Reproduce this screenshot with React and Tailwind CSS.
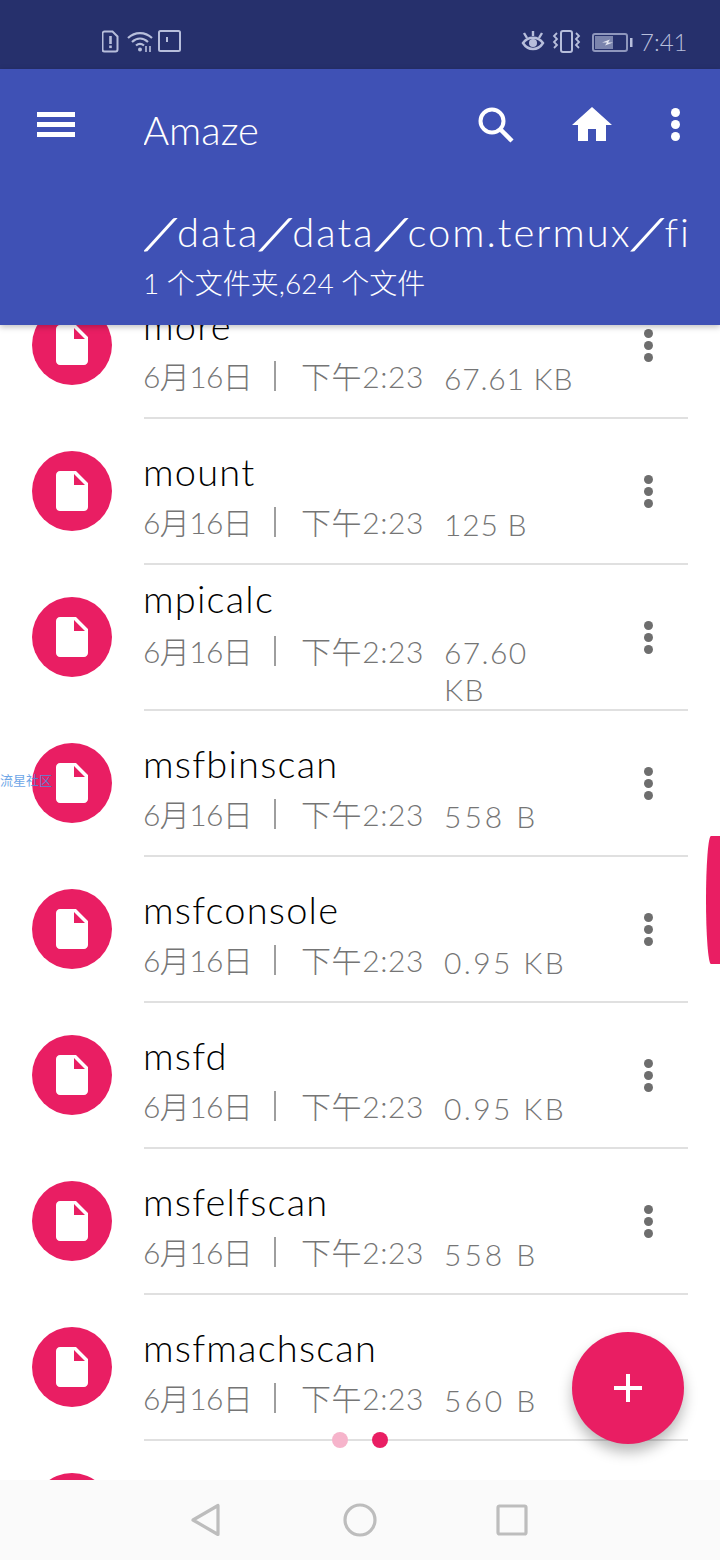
import React from "react";

const files = [
  { name: "more", size: "67.61 KB", track: "tracking-[0.8px]" },
  { name: "mount", size: "125 B", track: "tracking-[0.8px]" },
  { name: "mpicalc", size: "67.60 KB", wrap: true },
  { name: "msfbinscan", size: "558 B", track: "tracking-[3px]" },
  { name: "msfconsole", size: "0.95 KB", track: "tracking-[2.400px]" },
  { name: "msfd", size: "0.95 KB", track: "tracking-[2.400px]" },
  { name: "msfelfscan", size: "558 B", track: "tracking-[3px]" },
  { name: "msfmachscan", size: "560 B", track: "tracking-[3px]" },
  { name: "msfpescan", size: "558 B", track: "tracking-[3px]" },
];

function FileRow({ name, size, wrap, track }) {
  return (
    <div className="flex h-[146px] shrink-0 items-start">
      <div className="w-[144px] h-[146px] shrink-0 flex items-center pl-8">
        <div className="w-20 h-20 rounded-full bg-[#e91e63] flex items-center justify-center">
          <svg width="48" height="48" viewBox="0 0 24 24" fill="#ffffff">
            <path d="M6 2c-1.1 0-2 .9-2 2v16c0 1.1.9 2 2 2h12c1.1 0 2-.9 2-2V8l-6-6H6zm7 7V3.5L18.5 9H13z" />
          </svg>
        </div>
      </div>
      <div className="flex-1 h-[147px] mr-8 border-b-2 border-[#e0e0e0] flex items-start">
        <div className={`flex-1 -ml-px flex flex-col ${wrap ? "pt-[10px]" : "pt-[29px]"}`}>
          <div className="text-[38px] leading-[48px] text-black font-light tracking-[1.2px]">{name}</div>
          <div className={`flex items-start text-[30px] leading-[38px] text-[#757575] font-light ${wrap ? "mt-[10px]" : "mt-[8px]"}`}>
            <span className="w-[131px] shrink-0 tracking-[-0.6px]">6月16日</span>
            <span className="w-[27px] shrink-0 h-[30px] mt-[4px]"><span className="block w-[2px] h-[30px] bg-[#9e9e9e]"></span></span>
            <span className="w-[143px] shrink-0 whitespace-nowrap tracking-[0.6px]">下午2:23</span>
            {wrap ? (
              <span className="leading-[37px] tracking-[1.4px] mt-[2px]">67.60<br />KB</span>
            ) : (
              <span className={`whitespace-nowrap mt-[2px] ${track}`}>{size}</span>
            )}
          </div>
        </div>
        <div className="w-[80px] h-[146px] flex flex-col items-center justify-center gap-[3px] shrink-0">
          <span className="w-[9px] h-[9px] rounded-full bg-[#6e6e6e]"></span>
          <span className="w-[9px] h-[9px] rounded-full bg-[#6e6e6e]"></span>
          <span className="w-[9px] h-[9px] rounded-full bg-[#6e6e6e]"></span>
        </div>
      </div>
    </div>
  );
}

function StatusBar() {
  const c = "#b7bedb";
  return (
    <div className="h-[69px] bg-[#26306c] shrink-0 flex items-start pl-[102px] pr-[36px] pt-[30px]">
      <svg width="17" height="23" viewBox="0 0 17 23" fill="none">
        <path d="M2.5 1.5h8l5 5v13a2 2 0 0 1-2 2h-11a2 2 0 0 1-2-2v-16a2 2 0 0 1 2-2z" stroke={c} strokeWidth="2" />
        <rect x="7.2" y="6" width="2.6" height="8" fill={c} />
        <rect x="7.2" y="15.5" width="2.6" height="2.6" fill={c} />
      </svg>
      <svg width="27" height="23" viewBox="0 0 27 23" fill="none" stroke={c} strokeWidth="2.2" className="ml-[8px]">
        <path d="M1 8C8 1.5 18 1.500 25 8" />
        <path d="M5 12c5-4.500 11-4.500 16 0" />
        <path d="M9 15.500c3-2.500 5-2.500 8 0" />
        <circle cx="13" cy="19.500" r="2" fill={c} stroke="none" />
        <path d="M19 16v6M23 22v-6" strokeWidth="1.600" />
      </svg>
      <svg width="23" height="22" viewBox="0 0 23 22" fill="none" className="ml-[4px]">
        <rect x="1" y="1" width="21" height="20" rx="1.500" stroke={c} strokeWidth="2" />
        <rect x="8" y="7" width="2" height="5" fill={c} />
      </svg>
      <div className="flex-1"></div>
      <svg width="24" height="23" viewBox="0 0 24 23" fill="none" stroke={c} strokeWidth="2.400">
        <path d="M2 13c5-7 15-7 20 0c-5 8-15 8-20 0z" />
        <circle cx="12" cy="13" r="4" fill={c} stroke="none" />
        <path d="M3 3l3 5M12 1v5M21 3l-3 5" />
      </svg>
      <svg width="29" height="23" viewBox="0 0 29 23" fill="none" stroke={c} strokeWidth="2" className="ml-[7px]">
        <rect x="9" y="1" width="11" height="21" rx="2" />
        <path d="M5 3l-3 3l3 3l-3 3l3 3l-3 3M24 3l3 3l-3 3l3 3l-3 3l3 3" strokeWidth="1.800" />
      </svg>
      <svg width="41" height="19" viewBox="0 0 41 19" fill="none" className="ml-[11px] mt-[3px]">
        <rect x="1" y="1" width="34" height="17" rx="2" stroke="#8f97bd" strokeWidth="2" />
        <rect x="3" y="3" width="18" height="13" fill="#7b84ad" />
        <path d="M10 9.500l8-3l-2 3h5l-8 3l2-3z" fill="#e6e8f2" />
        <rect x="38" y="5" width="2.500" height="9" fill={c} />
      </svg>
      <span className="ml-[7px] mt-[-3px] text-[24px] leading-[30px] font-light text-[#b7bedb] w-[44px] whitespace-nowrap">7:41</span>
    </div>
  );
}

function Slash() {
  return <span className="inline-block w-[33px] text-center scale-x-[2.4] scale-y-[1.1] tracking-normal">/</span>;
}

function Header() {
  return (
    <div className="h-[256px] bg-[#3f51b5] shrink-0 relative z-10 shadow-[0_2px_6px_rgba(0,0,0,0.25)] flex">
      <div className="w-[144px] shrink-0 pl-[37px] pt-[43px] flex flex-col gap-[5px]">
        <span className="block w-[38px] h-[5px] bg-white"></span>
        <span className="block w-[38px] h-[5px] bg-white"></span>
        <span className="block w-[38px] h-[5px] bg-white"></span>
      </div>
      <div className="w-[544px] shrink-0 flex flex-col overflow-hidden">
        <div className="flex h-[130px]">
          <div className="w-[334px] pt-[37px] -ml-px mr-px text-[40px] leading-[48px] font-light text-white">Amaze</div>
          <svg width="36" height="36" viewBox="0 0 36 36" fill="none" stroke="#ffffff" className="mt-[38px]">
            <circle cx="14" cy="14" r="11.500" strokeWidth="4" />
            <path d="M23 23l11 11" strokeWidth="4.500" />
          </svg>
          <svg width="40" height="34" viewBox="0 0 40 34" fill="#ffffff" className="ml-[58px] mt-[38px]">
            <path d="M20 0L40 18H34V34H24V22H16V34H6V18H0z" />
          </svg>
          <div className="ml-[59px] mt-[39px] flex flex-col gap-[3px]">
            <span className="w-[9px] h-[9px] rounded-full bg-white"></span>
            <span className="w-[9px] h-[9px] rounded-full bg-white"></span>
            <span className="w-[9px] h-[9px] rounded-full bg-white"></span>
          </div>
        </div>
        <div className="text-[40px] leading-[50px] font-light text-white whitespace-nowrap mt-[8px] tracking-[2px]">
          <Slash />data<Slash />data<Slash />com.termux<Slash />files
        </div>
        <div className="text-[28px] leading-[36px] font-light text-white whitespace-nowrap mt-[8px] -ml-px">1 个文件夹,624 个文件</div>
      </div>
    </div>
  );
}

function NavBar() {
  return (
    <div className="h-[80px] bg-[#fafafa] shrink-0 relative z-10 flex items-center pl-[188px]">
      <svg width="32" height="34" viewBox="0 0 32 34" fill="none" stroke="#bdbdbd" strokeWidth="3.200" strokeLinejoin="round" className="mr-[123px]">
        <path d="M30 2.500V31.500L5 17z" />
      </svg>
      <svg width="34" height="34" viewBox="0 0 34 34" fill="none" stroke="#bdbdbd" strokeWidth="3.200" className="mr-[118px]">
        <circle cx="17" cy="17" r="15" />
      </svg>
      <svg width="32" height="32" viewBox="0 0 32 32" fill="none" stroke="#bdbdbd" strokeWidth="3.200" strokeLinejoin="round" className="ml-px">
        <rect x="2" y="2" width="28" height="28" rx="1.500" />
      </svg>
    </div>
  );
}

export default function App() {
  return (
    <div className="relative w-[720px] h-[1560px] overflow-hidden bg-white flex flex-col font-['Lato','Noto_Sans_CJK_SC',sans-serif]">
      <StatusBar />
      <Header />
      <div className="flex-1 overflow-hidden">
        <div className="mt-[-53px] flex flex-col">
          {files.map((f) => (
            <FileRow key={f.name} {...f} />
          ))}
        </div>
      </div>
      <NavBar />

      <div className="absolute left-0 top-[772px] text-[13px] leading-[16px] text-[#4a90e2] opacity-80 whitespace-nowrap z-20">流星社区</div>
      <div className="absolute right-0 top-[836px] w-[14px] h-[128px] bg-[#e91e63] rounded-l-[5px_64px] z-20"></div>
      <div className="absolute left-[332px] top-[1432px] w-4 h-4 rounded-full bg-[#f6b4cb] z-20"></div>
      <div className="absolute left-[372px] top-[1432px] w-4 h-4 rounded-full bg-[#e91e63] z-20"></div>
      <div className="absolute left-[572px] top-[1332px] w-[112px] h-[112px] rounded-full bg-[#e91e63] shadow-[0_8px_14px_rgba(0,0,0,0.28)] flex items-center justify-center z-20">
        <svg width="28" height="28" viewBox="0 0 28 28" fill="#ffffff">
          <path d="M12 0h4v12h12v4H16v12h-4V16H0v-4h12z" />
        </svg>
      </div>
    </div>
  );
}
